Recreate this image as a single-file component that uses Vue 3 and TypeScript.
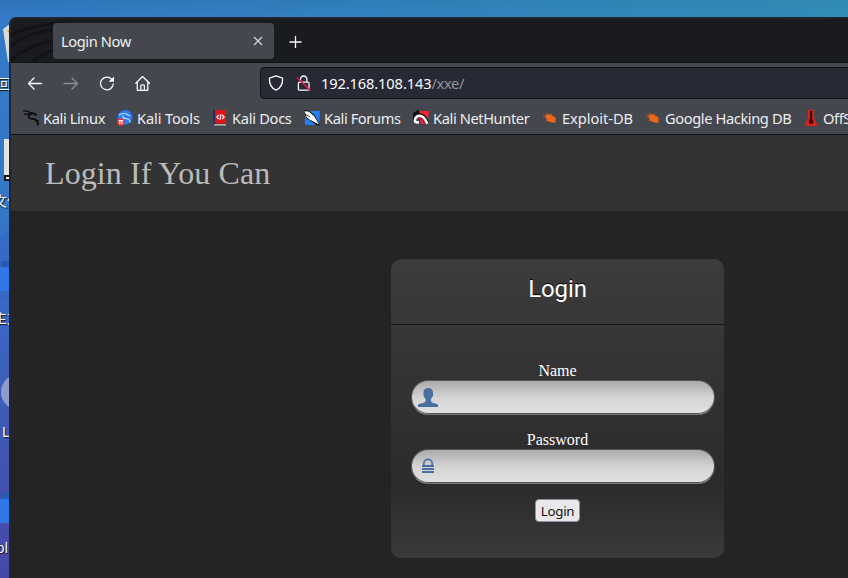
<script setup lang="ts">
import { ref } from 'vue'

interface Bookmark {
  icon: string
  label: string
}

const bookmarks: Bookmark[] = [
  { icon: 'linux', label: 'Kali Linux' },
  { icon: 'tools', label: 'Kali Tools' },
  { icon: 'docs', label: 'Kali Docs' },
  { icon: 'forums', label: 'Kali Forums' },
  { icon: 'nethunter', label: 'Kali NetHunter' },
  { icon: 'bug', label: 'Exploit-DB' },
  { icon: 'bug', label: 'Google Hacking DB' },
  { icon: 'offsec', label: 'OffSec' },
]

const name = ref('')
const password = ref('')
</script>

<template>
  <div class="desktop">
    <svg class="wallpaper" width="10" height="578" viewBox="0 0 10 578">
      <path d="M0 300V238L10 228V300Z" fill="#3567c2" opacity=".6" />
      <path d="M3 29L10 24V62H8Z" fill="#dcdcd6" />
      <path d="M7 31l3-2v5z" fill="#c4a940" />
      <path d="M4 139h6v42H4z" fill="#111" />
      <path d="M4 139h6v36H4z" fill="#e4e4e4" />
      <path d="M6 177h4v2H6z" fill="#fff" />
      <path d="M1 261h9v8H1zM1 493h9v8H1z" fill="#2859b4" />
      <path d="M0 267h10v24H0zM0 499h10v24H0z" fill="#3078e8" />
      <circle cx="19" cy="392" r="18" fill="#8c9dcb" />
    </svg>
    <span class="desk-label l1">回</span>
    <span class="desk-label l2">文件</span>
    <span class="desk-label l3">主文</span>
    <span class="desk-label l4">L</span>
    <span class="desk-label l5">ble</span>

    <div class="window">
      <div class="tabs">
        <svg class="dragon-theme" width="90" height="43" viewBox="0 0 90 43">
          <g fill="none" stroke="#121316" stroke-width="3">
            <path d="M-2 17Q18 6 55 4" />
            <path d="M-2 29Q14 13 52 9" />
            <path d="M-2 43Q16 25 52 20" />
            <path d="M20 44Q32 33 52 28" />
          </g>
        </svg>
        <div class="tab">
          <span>Login Now</span>
          <svg width="10" height="10" viewBox="0 0 10 10"><path d="M1 1l8 8M9 1L1 9" stroke="#dfdfe1" stroke-width="1.1" /></svg>
        </div>
        <svg class="plus" width="14" height="14" viewBox="0 0 14 14"><path d="M6.5 1v12M.5 7h12" stroke="#fbfbfe" stroke-width="1.3" /></svg>
      </div>

      <div class="toolbar">
        <svg class="nav" width="16" height="16" viewBox="0 0 16 16"><path d="M14.5 8.5H1.5M7 3L1.5 8.5L7 14" /></svg>
        <svg class="nav dim" width="16" height="16" viewBox="0 0 16 16"><path d="M1 8.5h13.5M9 3L14.5 8.5L9 14" /></svg>
        <svg class="nav" width="16" height="16" viewBox="0 0 16 16"><path d="M12.8 4.3A6.4 6.4 0 1 0 14.3 9" /><path d="M15 1.5V6.8H9.7Z" fill="#fbfbfe" stroke="none" /></svg>
        <svg class="nav" width="16" height="16" viewBox="0 0 16 16"><path d="M.8 8.3L7.5 1.5L14.5 8.3M2.3 7.3v8h10.5v-8M5.8 15.2v-4.4q0-1 1-1h1.6q1 0 1 1v4.4" /></svg>
        <div class="urlbar">
          <svg width="16" height="16" viewBox="0 0 16 16"><path d="M8 .8L14.6 3.2C14.8 8.5 12.8 13 8 15.2C3.2 13 1.2 8.5 1.4 3.2Z" fill="none" stroke="#fbfbfe" stroke-width="1.3" stroke-linejoin="round" /></svg>
          <svg width="16" height="16" viewBox="0 0 16 16"><rect x="2.4" y="7.2" width="10.6" height="8" rx="1.3" fill="none" stroke="#fbfbfe" stroke-width="1.3" /><path d="M4.5 7V4.2a3.2 3.2 0 0 1 6.4 0V7" fill="none" stroke="#fbfbfe" stroke-width="1.3" /><path d="M1 2.5L14.5 15.5" stroke="#e8174a" stroke-width="1.7" /></svg>
          <p class="url"><b>192.168.108.143</b>/xxe/</p>
        </div>
      </div>

      <nav class="bookmarks">
        <a v-for="item in bookmarks" :key="item.label" :class="['bookmark', item.icon]">
          <svg width="16" height="16" viewBox="0 0 16 16">
            <g v-if="item.icon === 'linux'" fill="none" stroke="#08080a">
              <path d="M0 1.2q5-1 8 2.1M1 4.5q4-1.2 7.5 0" stroke-width="1.3" />
              <path d="M8 3.3q3-.6 5.5 2M13.8 4.7l-2 .2" stroke-width="1.7" />
              <path d="M8 3.5C3.5 5.7 6 8.8 9 8.8C12.4 8.8 14.8 10.5 15.3 15.2" stroke-width="1.8" />
              <path d="M12 10.2l3.8.5" />
            </g>
            <g v-else-if="item.icon === 'tools'">
              <circle cx="8.2" cy="7.4" r="7.3" fill="#277bf5" />
              <path d="M2 5q5-3 9 0M6 5.5q-1 3 3 3q4 .5 4 4M9 4l4 2" fill="none" stroke="#d7e7ff" stroke-width="1.1" />
              <circle cx="3.8" cy="12" r="3.8" fill="#ee343a" />
              <path d="M1.5 10.5h4.6M2.8 10.5v3.8M4.9 10.5v3.8" stroke="#fff" stroke-width="1.1" />
            </g>
            <g v-else-if="item.icon === 'docs'">
              <path d="M1.5 0H4v15H1.5z" fill="#172967" />
              <path d="M3 0h11v13.5H3z" fill="#e01319" />
              <path d="M2 14.8h12" stroke="#d8c9c9" stroke-width="1.2" />
              <path d="M6.8 5L4.8 7l2 2M10.2 5l2 2l-2 2M9 4.2L8 9.8" fill="none" stroke="#fff" stroke-width="1.1" />
            </g>
            <g v-else-if="item.icon === 'forums'">
              <path d="M1 1h15l-1 14H1z" fill="#2380f5" />
              <path d="M0 0l5 .5l5.5 4.5l5.5 10-3 .5L6 10.5L2 8z" fill="#111" />
              <path d="M.5 1.2l4 .3l5.5 4.5l5 8.5L5.5 9.5L2.5 7z" fill="#fff" />
              <path d="M1 4l5 3" stroke="#111" stroke-width=".8" />
            </g>
            <g v-else-if="item.icon === 'nethunter'">
              <path d="M5 1h11l-1.5 13H8z" fill="#ed2735" />
              <path d="M0 5l6-4M1 12Q-1 5 6 4.5q6 0 9 9" fill="none" stroke="#111" stroke-width="3" />
              <path d="M6 12.2Q1 13 2 9.5Q2.8 5.8 7 5.8q3.8 0 7.5 8" fill="none" stroke="#fff" stroke-width="2.6" />
              <path d="M5 9.5q3-2 5 1l2 4" fill="none" stroke="#a71730" stroke-width="1.4" />
            </g>
            <g v-else-if="item.icon === 'bug'">
              <path d="M1 4l4 2M.5 7h4M3 11l3-1M4 3l3 2M10 3l-1 3M13 6l-3 1M10 12l4 1" stroke="#9e552d" />
              <path d="M3.2 5.5Q7 3.3 10 5.4L14.3 8.5L13 10L14 12L10.5 12.5Q6 12.2 4.5 9.5Z" fill="#ed6516" />
            </g>
            <g v-else>
              <path d="M5 0h6v7l3.5 9h-13L5 7z" fill="#db2020" />
              <path d="M7 1h2.2v7l1.5 4L9 14H7l-1.5-2L7 8z" fill="#430708" />
            </g>
          </svg>
          <span>{{ item.label }}</span>
        </a>
      </nav>

      <header class="page-header"><h1>Login If You Can</h1></header>
      <main>
        <form class="card" @submit.prevent>
          <h2>Login</h2>
          <div class="fields">
            <label for="name">Name</label>
            <div class="field">
              <svg width="20" height="20" viewBox="0 0 20 20"><path d="M5.5 4Q6 0 10 0Q14.5 0 15 4V8L13 11V13.5L15 15L19 16L20 17V19H0V17L1 16L5 15L7.5 13.5V11L5.5 8Z" fill="#486fa0" /></svg>
              <input id="name" v-model="name" type="text" />
            </div>
            <label for="password">Password</label>
            <div class="field">
              <svg width="20" height="20" viewBox="0 0 20 20"><path d="M5.8 9V6.5a4.2 4.2 0 0 1 8.4 0V9" fill="none" stroke="#486fa0" stroke-width="1.7" /><path d="M4 9h12M4 12h12M4 15h12" stroke="#486fa0" stroke-width="2" /></svg>
              <input id="password" v-model="password" type="password" />
            </div>
            <button>Login</button>
          </div>
        </form>
      </main>
    </div>
  </div>
</template>

<style>
body { overflow: hidden; }
</style>

<style scoped>
* { box-sizing: border-box; }
.desktop {
  position: relative;
  width: 848px;
  height: 578px;
  overflow: hidden;
  background: linear-gradient(90deg, transparent, rgba(50, 149, 176, .65)) top / 100% 18px no-repeat, linear-gradient(#2d74b8, #347ac8 3%, #3478c8 35%, #3969c3 53%, #4057b5 75%, #4748a5);
  font-family: "Noto Sans", "Noto Sans CJK SC", sans-serif;
}
.wallpaper { position: absolute; left: 0; top: 0; }
.desk-label { position: absolute; color: #fff; font-size: 14px; line-height: 20px; white-space: nowrap; text-shadow: 1px 1px 1px #111; }
.l1 { left: -3px; top: 74px; }
.l2 { left: -7px; top: 191px; }
.l3 { left: -7px; top: 308px; }
.l4 { left: 2px; top: 422px; }
.l5 { left: -4px; top: 538px; }
.window {
  position: absolute;
  left: 9px;
  top: 17px;
  width: 870px;
  height: 570px;
  display: flex;
  flex-direction: column;
  overflow: hidden;
  border: solid #23252e;
  border-width: 2px 0 0 2px;
  border-radius: 7px 0 0 0;
  background: #242424;
}
.tabs { position: relative; flex: 0 0 44px; display: flex; align-items: flex-start; padding: 4px 0 0 42px; background: #1a1b1f; border-bottom: 1px solid #111216; }
.dragon-theme { position: absolute; left: 0; top: 0; }
.tab { position: relative; width: 221px; height: 36px; display: flex; align-items: center; justify-content: space-between; padding: 0 11px 0 8px; background: #44474d; border-radius: 4px; color: #f0f0f2; font-size: 14.67px; letter-spacing: -.4px; }
.plus { margin: 12px 0 0 15px; }
.toolbar { flex: 0 0 40px; display: flex; align-items: center; gap: 20px; padding-left: 16px; background: #44474d; }
.nav { flex: none; fill: none; stroke: #fbfbfe; stroke-width: 1.3; stroke-linejoin: round; stroke-linecap: round; }
.dim { opacity: .4; }
.urlbar { flex: 1; height: 32px; margin-left: 89px; display: flex; align-items: center; gap: 12px; padding-left: 7px; background: #272934; border: 1px solid #111217; border-radius: 4px; }
.url { margin: 0 0 0 -3px; font-size: 14.67px; color: #929399; letter-spacing: -.35px; }
.url b { font-weight: 400; color: #fbfbfe; letter-spacing: -.13px; }
.bookmarks {
  flex: 0 0 32px;
  display: grid;
  grid-template-columns: 94px 95px 92px 109px 129px 103px 158px 80px;
  align-items: center;
  padding: 0 0 1px 12px;
  background: #44474d;
  border-bottom: 1px solid #111216;
}
.bookmark { display: flex; align-items: center; gap: 4px; color: #ededf0; font-size: 14.67px; line-height: 20px; letter-spacing: -.4px; white-space: nowrap; }
.bookmark.tools { letter-spacing: -.15px; }
.bookmark.docs { letter-spacing: -.3px; }
.bookmark.bug:nth-child(6) { letter-spacing: -.05px; }
.page-header { flex: 0 0 76px; padding: 20px 0 0 34px; background: #333; }
h1 { margin: 0; font: 400 32px/37px "Liberation Serif", serif; letter-spacing: .08px; color: #bbb; }
main { padding: 48px 0 0 380px; }
.card { width: 333px; height: 299px; border-radius: 10px; background: linear-gradient(#3c3c3c, #2b2b2b 75%, #3a3a3a); }
h2 { height: 66px; margin: 0; padding-top: 16px; border-bottom: 1px solid #171717; text-align: center; color: #fff; text-shadow: 0 -1px 0 #000; font: 400 24px/29px Roboto, sans-serif; letter-spacing: -.1px; }
.fields { display: flex; flex-direction: column; align-items: center; padding-top: 37px; color: #fff; }
label { height: 18px; font: 16px/18px "Liberation Serif", serif; }
.field { width: 304px; height: 35px; margin: 0 0 16px 11px; display: flex; align-items: center; padding: 1px 0 0 6px; border: 1px solid #555; border-bottom-color: #777; border-radius: 17px; background: linear-gradient(#aaa, #d4d4d4 50%, #e2e2e2); box-shadow: inset 0 -1px #555; }
.field svg { flex: none; }
input { flex: 1; min-width: 0; border: 0; outline: 0; background: transparent; }
button { width: 45px; height: 23px; margin-top: -1px; padding: 1px 0 0; border: 1px solid #8f8f9d; border-radius: 4px; background: #e9e9ed; color: #111; font: 13.33px/20px "Noto Sans", sans-serif; letter-spacing: -.3px; }
</style>
